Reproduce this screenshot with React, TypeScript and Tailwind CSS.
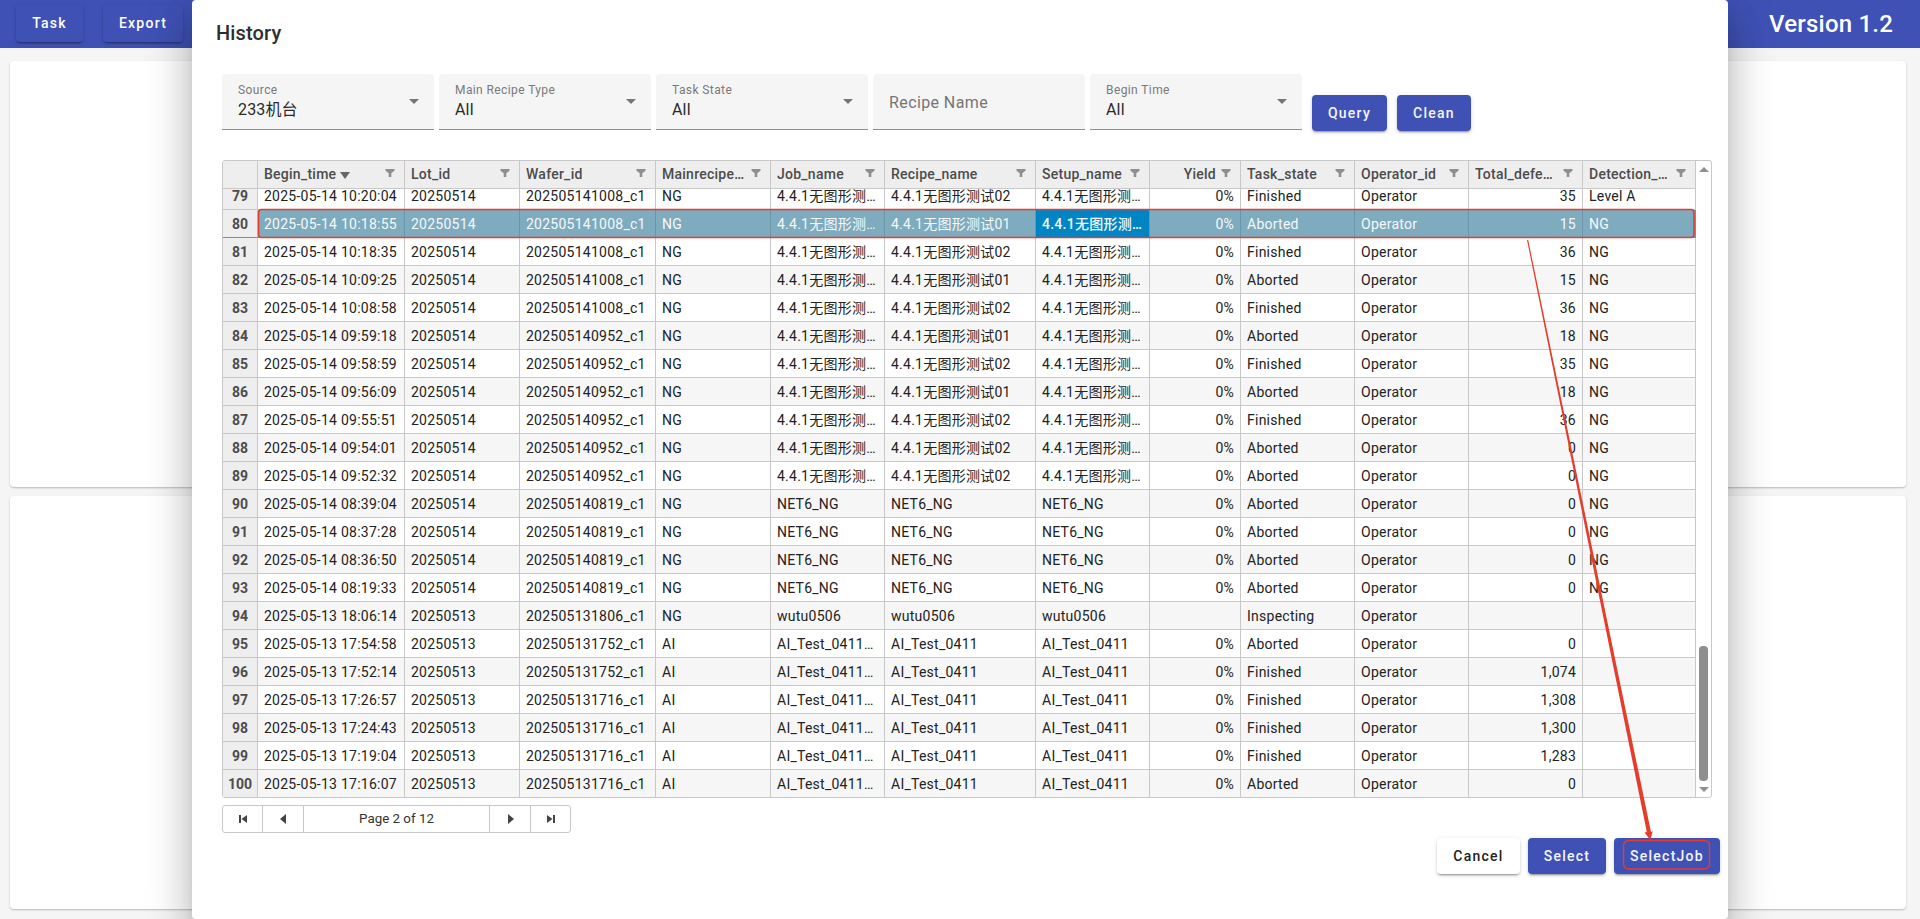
import React from "react";

type Row = { n: number; t: string; lot: string; wafer: string; type: string; job: string; recipe: string; setup: string; yld: string; state: string; def: string; lvl: string };

const cn = "4.4.1无图形测试";
const raw: [number, string, string, string, string, string, string, string, string][] = [
  [79, "2025-05-14 10:20:04", "202505141008_c1", "NG", cn + "02", "0%", "Finished", "35", "Level A"],
  [80, "2025-05-14 10:18:55", "202505141008_c1", "NG", cn + "01", "0%", "Aborted", "15", "NG"],
  [81, "2025-05-14 10:18:35", "202505141008_c1", "NG", cn + "02", "0%", "Finished", "36", "NG"],
  [82, "2025-05-14 10:09:25", "202505141008_c1", "NG", cn + "01", "0%", "Aborted", "15", "NG"],
  [83, "2025-05-14 10:08:58", "202505141008_c1", "NG", cn + "02", "0%", "Finished", "36", "NG"],
  [84, "2025-05-14 09:59:18", "202505140952_c1", "NG", cn + "01", "0%", "Aborted", "18", "NG"],
  [85, "2025-05-14 09:58:59", "202505140952_c1", "NG", cn + "02", "0%", "Finished", "35", "NG"],
  [86, "2025-05-14 09:56:09", "202505140952_c1", "NG", cn + "01", "0%", "Aborted", "18", "NG"],
  [87, "2025-05-14 09:55:51", "202505140952_c1", "NG", cn + "02", "0%", "Finished", "36", "NG"],
  [88, "2025-05-14 09:54:01", "202505140952_c1", "NG", cn + "02", "0%", "Aborted", "0", "NG"],
  [89, "2025-05-14 09:52:32", "202505140952_c1", "NG", cn + "02", "0%", "Aborted", "0", "NG"],
  [90, "2025-05-14 08:39:04", "202505140819_c1", "NG", "NET6_NG", "0%", "Aborted", "0", "NG"],
  [91, "2025-05-14 08:37:28", "202505140819_c1", "NG", "NET6_NG", "0%", "Aborted", "0", "NG"],
  [92, "2025-05-14 08:36:50", "202505140819_c1", "NG", "NET6_NG", "0%", "Aborted", "0", "NG"],
  [93, "2025-05-14 08:19:33", "202505140819_c1", "NG", "NET6_NG", "0%", "Aborted", "0", "NG"],
  [94, "2025-05-13 18:06:14", "202505131806_c1", "NG", "wutu0506", "", "Inspecting", "", ""],
  [95, "2025-05-13 17:54:58", "202505131752_c1", "AI", "AI_Test_0411", "0%", "Aborted", "0", ""],
  [96, "2025-05-13 17:52:14", "202505131752_c1", "AI", "AI_Test_0411", "0%", "Finished", "1,074", ""],
  [97, "2025-05-13 17:26:57", "202505131716_c1", "AI", "AI_Test_0411", "0%", "Finished", "1,308", ""],
  [98, "2025-05-13 17:24:43", "202505131716_c1", "AI", "AI_Test_0411", "0%", "Finished", "1,300", ""],
  [99, "2025-05-13 17:19:04", "202505131716_c1", "AI", "AI_Test_0411", "0%", "Finished", "1,283", ""],
  [100, "2025-05-13 17:16:07", "202505131716_c1", "AI", "AI_Test_0411", "0%", "Aborted", "0", ""],
];

const rows: Row[] = raw.map((r) => ({
  n: r[0],
  t: r[1],
  lot: r[1].slice(0, 10).replace(/-/g, ""),
  wafer: r[2],
  type: r[3],
  job: r[4].startsWith("AI") ? "AI_Test_0411_Job" : r[4],
  recipe: r[4],
  setup: r[4],
  yld: r[5],
  state: r[6],
  def: r[7],
  lvl: r[8],
}));

const Funnel = () => (
  <svg width="10" height="10" viewBox="0 0 10 10" className="shrink-0 ml-[5px] mr-[9px] -mt-[3px]">
    <path d="M0.5 1h9v1.7L6.3 5.2V9H3.7V5.2L0.5 2.7z" fill="#8f8f8f" />
  </svg>
);

const Head = ({ w, name, right, sort }: { w: string; name: string; right?: boolean; sort?: boolean }) => (
  <div className={`${w} shrink-0 h-full flex items-center border-r border-[#c8c8c8] pl-[6px]`}>
    <span className={`flex-1 min-w-0 truncate font-medium text-[#4c4c4c] ${right ? "text-right" : ""}`}>
      {name}
      {sort && (
        <svg width="10" height="7" viewBox="0 0 10 7" className="inline-block ml-[4px]">
          <path d="M0 0h10L5 7z" fill="#666" />
        </svg>
      )}
    </span>
    <Funnel />
  </div>
);

const Cell = ({ w, children, right, sel, cur }: { w: string; children: React.ReactNode; right?: boolean; sel: boolean; cur?: boolean }) => (
  <div
    className={`${w} shrink-0 h-full px-[6px] pt-[1px] leading-[27px] truncate border-r ${sel ? "border-[#6b96a9]" : "border-[#c8c8c8]"} ${cur ? "bg-[#0085c4] font-medium" : ""} ${right ? "text-right" : ""}`}
  >
    {children}
  </div>
);

const Field = ({ label, value }: { label: string; value: string }) => (
  <div className="w-[212px] h-[56px] shrink-0 bg-[#f5f5f5] rounded-t-[4px] border-b border-[#8e8e8e] pl-[16px] pr-[16px] flex items-center">
    <div className="flex-1 min-w-0">
      <div className="text-[12px] leading-[14px] text-[#7a7a7a] tracking-[0.4px] pt-[2px]">{label}</div>
      <div className="text-[16px] leading-[24px] text-[#2a2a2a] tracking-[0.15px] mt-[1px]">{value}</div>
    </div>
    <svg width="10" height="5" viewBox="0 0 10 5" className="shrink-0 mr-[-1px] -mt-[1px]">
      <path d="M0 0h10L5 5z" fill="#757575" />
    </svg>
  </div>
);

const btnShadow = "shadow-[0_3px_1px_-2px_rgba(0,0,0,0.2),0_2px_2px_0_rgba(0,0,0,0.14),0_1px_5px_0_rgba(0,0,0,0.12)]";

const Btn = ({ w, children, light, className = "" }: { w: string; children: React.ReactNode; light?: boolean; className?: string }) => (
  <button
    className={`${w} h-[36px] rounded-[4px] text-[14px] font-medium tracking-[1.25px] ${btnShadow} ${light ? "bg-white text-[#222]" : "bg-[#3f51b5] text-[#f4f5fb]"} ${className}`}
  >
    {children}
  </button>
);

const Pager = ({ children, w }: { children: React.ReactNode; w: string }) => (
  <div className={`${w} h-full flex items-center justify-center border-r border-[#c8c8c8] last:border-r-0`}>{children}</div>
);

export default function App() {
  return (
    <div className="relative w-[1920px] h-[919px] overflow-hidden bg-[#f5f5f5] [font-family:Roboto,'Noto_Sans_CJK_SC',sans-serif]">
      <header className="h-[48px] bg-[#3f51b5] flex items-start pl-[16px] pr-[27px] text-white">
        <div className={`mt-[5px] h-[37px] w-[67px] rounded-[4px] flex items-center justify-center text-[14px] font-medium tracking-[1.25px] ${btnShadow}`}>Task</div>
        <div className={`mt-[5px] ml-[20px] h-[37px] w-[80px] rounded-[4px] flex items-center justify-center text-[14px] font-medium tracking-[1.25px] ${btnShadow}`}>Export</div>
        <div className="ml-auto text-[24px] leading-[48px] font-medium tracking-[0.2px]">Version 1.2</div>
      </header>
      <main className="pl-[10px] pr-[14px] pt-[13px] flex flex-col gap-[9px]">
        <section className="h-[426px] bg-white rounded-[4px] shadow-[0_1px_2px_rgba(0,0,0,0.25)]" />
        <section className="h-[413px] bg-white rounded-[4px] shadow-[0_1px_2px_rgba(0,0,0,0.25)]" />
      </main>

      <div className="absolute left-[192px] top-0 w-[1536px] h-[919px] bg-white rounded-[4px] flex flex-col text-[14px] text-[#222] shadow-[0_11px_15px_-7px_rgba(0,0,0,0.2),0_24px_38px_3px_rgba(0,0,0,0.14),0_9px_46px_8px_rgba(0,0,0,0.12)]">
        <h2 className="h-[74px] pl-[24px] pt-[17px] text-[20px] leading-[32px] font-medium text-[#2e2e2e] tracking-[0.15px]">History</h2>

        <div className="pl-[30px] pr-[16px] flex gap-[5px] h-[56px]">
          <Field label="Source" value="233机台" />
          <Field label="Main Recipe Type" value="All" />
          <Field label="Task State" value="All" />
          <div className="w-[212px] h-[56px] shrink-0 bg-[#f5f5f5] rounded-t-[4px] border-b border-[#8e8e8e] pl-[16px] pt-[2px] flex items-center text-[16px] text-[#757575] tracking-[0.4px]">Recipe Name</div>
          <Field label="Begin Time" value="All" />
          <Btn w="w-[75px]" className="mt-[21px] ml-[5px]">Query</Btn>
          <Btn w="w-[74px]" className="mt-[21px] ml-[5px]">Clean</Btn>
        </div>

        <div className="ml-[30px] mt-[30px] w-[1490px] h-[638px] border border-[#c8c8c8] rounded-[3px] flex overflow-hidden tracking-[0.25px]">
          <div className="w-[1473px] shrink-0 flex flex-col">
            <div className="h-[28px] shrink-0 flex bg-[#eeeeee] border-b border-[#c8c8c8]">
              <div className="w-[35px] shrink-0 h-full border-r border-[#c8c8c8]" />
              <Head w="w-[147px]" name="Begin_time" sort />
              <Head w="w-[115px]" name="Lot_id" />
              <Head w="w-[136px]" name="Wafer_id" />
              <Head w="w-[115px]" name="Mainrecipe_type" />
              <Head w="w-[114px]" name="Job_name" />
              <Head w="w-[151px]" name="Recipe_name" />
              <Head w="w-[114px]" name="Setup_name" />
              <Head w="w-[91px]" name="Yield" right />
              <Head w="w-[114px]" name="Task_state" />
              <Head w="w-[114px]" name="Operator_id" />
              <Head w="w-[114px]" name="Total_defects" />
              <Head w="w-[113px]" name="Detection_level" />
            </div>
            <div className="flex-1 overflow-hidden">
              <div className="-mt-[7px]">
                {rows.map((r) => {
                  const sel = r.n === 80;
                  return (
                    <div
                      key={r.n}
                      className={`h-[28px] flex border-b ${sel ? "bg-[#7fabbe] text-[#f5f8fa] border-[#6b96a9]" : `border-[#c8c8c8] ${r.n % 2 === 0 ? "bg-[#f6f6f6]" : "bg-white"}`}`}
                    >
                      <div className="w-[35px] shrink-0 h-full bg-[#eeeeee] border-r border-[#c8c8c8] text-center font-bold text-[#4c4c4c] pt-[1px] leading-[27px] tracking-normal">{r.n}</div>
                      <Cell w="w-[147px]" sel={sel}>{r.t}</Cell>
                      <Cell w="w-[115px]" sel={sel}>{r.lot}</Cell>
                      <Cell w="w-[136px]" sel={sel}>{r.wafer}</Cell>
                      <Cell w="w-[115px]" sel={sel}>{r.type}</Cell>
                      <Cell w="w-[114px]" sel={sel}>{r.job}</Cell>
                      <Cell w="w-[151px]" sel={sel}>{r.recipe}</Cell>
                      <Cell w="w-[114px]" sel={sel} cur={sel}>{r.setup.startsWith("4.4.1") ? r.setup + "_setup" : r.setup}</Cell>
                      <Cell w="w-[91px]" sel={sel} right>{r.yld}</Cell>
                      <Cell w="w-[114px]" sel={sel}>{r.state}</Cell>
                      <Cell w="w-[114px]" sel={sel}>Operator</Cell>
                      <Cell w="w-[114px]" sel={sel} right>{r.def}</Cell>
                      <Cell w="w-[113px]" sel={sel}>{r.lvl}</Cell>
                    </div>
                  );
                })}
              </div>
            </div>
          </div>
          <div className="flex-1 flex flex-col items-center pt-[6px] pb-[5px]">
            <svg width="10" height="5" viewBox="0 0 10 5" className="shrink-0">
              <path d="M5 0l5 5H0z" fill="#8f8f8f" />
            </svg>
            <div className="flex-1" />
            <div className="w-[9px] h-[135px] rounded-[4px] bg-[#8f8f8f] shrink-0" />
            <svg width="10" height="5" viewBox="0 0 10 5" className="shrink-0 mt-[6px]">
              <path d="M0 0h10L5 5z" fill="#8f8f8f" />
            </svg>
          </div>
        </div>

        <div className="ml-[30px] mt-[7px] w-[349px] h-[28px] border border-[#c8c8c8] rounded-[3px] flex text-[13.33px] text-[#333]">
          <Pager w="w-[40px]">
            <svg width="10" height="10" viewBox="0 0 10 10"><path d="M1 1h2v8H1zM9 1v8L3.5 5z" fill="#444" /></svg>
          </Pager>
          <Pager w="w-[41px]">
            <svg width="7" height="10" viewBox="0 0 7 10"><path d="M6 0v10L0 5z" fill="#444" /></svg>
          </Pager>
          <Pager w="w-[186px]">Page 2 of 12</Pager>
          <Pager w="w-[41px]">
            <svg width="7" height="10" viewBox="0 0 7 10"><path d="M1 0v10l6-5z" fill="#444" /></svg>
          </Pager>
          <Pager w="w-[39px]">
            <svg width="10" height="10" viewBox="0 0 10 10"><path d="M1 1v8l5.5-4zM7 1h2v8H7z" fill="#444" /></svg>
          </Pager>
        </div>

        <div className="mt-[5px] pr-[8px] flex justify-end gap-[8px]">
          <Btn w="w-[83px]" light>Cancel</Btn>
          <Btn w="w-[78px]">Select</Btn>
          <Btn w="w-[106px]">SelectJob</Btn>
        </div>
      </div>

      <svg className="absolute inset-0 pointer-events-none" width="1920" height="919" viewBox="0 0 1920 919" fill="none">
        <rect x="258.5" y="209.5" width="1435.5" height="28" rx="3" stroke="#e53d2c" strokeWidth="1.6" />
        <rect x="1623.5" y="840.5" width="86" height="28.5" rx="5" stroke="#e53d2c" strokeWidth="1.4" />
        <path d="M1527 240h1.2L1651 832l1.8-.8-2.6 8.8-5.6-7.6 2.2-.4z" fill="#e53d2c" />
      </svg>
    </div>
  );
}
